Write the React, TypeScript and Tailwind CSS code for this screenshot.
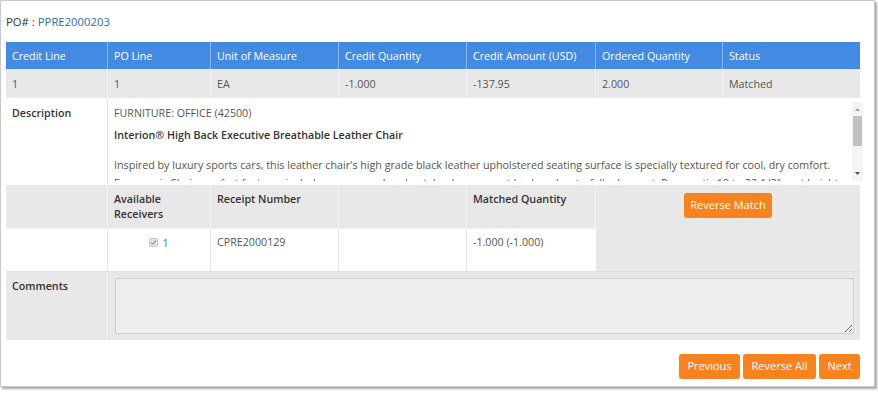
import React from 'react';

const font = { fontFamily: '"Open Sans", "Noto Sans", sans-serif' };

const headers = [
  'Credit Line',
  'PO Line',
  'Unit of Measure',
  'Credit Quantity',
  'Credit Amount (USD)',
  'Ordered Quantity',
  'Status',
];

const values = ['1', '1', 'EA', '-1.000', '-137.95', '2.000', 'Matched'];

const cols = 'grid grid-cols-[102px_103px_128px_128px_129px_127px_1fr]';

function OrangeButton({ label, className = '' }: { label: string; className?: string }) {
  return (
    <button
      className={`h-[25px] whitespace-nowrap rounded-[3px] bg-[#f7821e] text-[11px] text-white ${className}`}
    >
      {label}
    </button>
  );
}

export default function App() {
  return (
    <div className="h-[393px] w-[878px] bg-white text-[10.7px] text-[#555]" style={font}>
      <div className="flex h-[387px] w-[875px] flex-col border border-[#c9c9c9] px-[5px] shadow-[2px_2px_2px_rgba(0,0,0,0.35)]">
        <div className="flex h-[41px] items-center pt-[1px] text-[11.3px] text-[#333]">
          <span>PO# :</span>
          <span className="ml-[3px] text-[#2d6db4]">PPRE2000203</span>
        </div>

        <div className="w-[854px]">
          {/* header */}
          <div className={`${cols} h-[27px] bg-[#438ae2] text-white`}>
            {headers.map((h, i) => (
              <div
                key={h}
                className={`flex items-center whitespace-nowrap px-[6px] pt-[1px] ${i < headers.length - 1 ? 'border-r border-[#8db8ee]' : ''}`}
              >
                {h}
              </div>
            ))}
          </div>

          {/* values */}
          <div className={`${cols} h-[29px] bg-[#e8e8e8]`}>
            {values.map((v, i) => (
              <div
                key={i}
                className={`flex items-center px-[6px] pt-[1px] ${i < values.length - 1 ? 'border-r border-[#f4f4f4]' : ''}`}
              >
                {v}
              </div>
            ))}
          </div>

          {/* description */}
          <div className="grid h-[87px] grid-cols-[102px_1fr] bg-white">
            <div className="border-r border-[#e6e6e6] px-[6px] pt-[7px] font-semibold text-[#333]">
              Description
            </div>
            <div className="flex h-[87px] px-[6px] pt-[4px] pb-[4px]">
              <div className="flex-1 overflow-hidden pt-[2px] leading-[18px]">
                <div>FURNITURE: OFFICE (42500)</div>
                <div className="mt-[4px] font-semibold text-[#333]">
                  Interion® High Back Executive Breathable Leather Chair
                </div>
                <p className="mt-[12px] w-[735px]">
                  Inspired by luxury sports cars, this leather chair's high grade black leather upholstered
                  seating surface is specially textured for cool, dry comfort. Ergonomic Chair comfort
                  features include a generous headrest, lumbar support back and waterfall edge seat.
                  Pneumatic 19 to 22-1/2" seat height adjustment.
                </p>
              </div>
              <div className="ml-[3px] flex w-[11px] flex-col items-center bg-[#f4f4f4]">
                <svg width="7" height="10" viewBox="0 0 7 10" className="mt-[2px]">
                  <path d="M1 7 L3.5 4 L6 7 Z" fill="#a0a0a0" />
                </svg>
                <div className="mt-[2px] h-[30px] w-[9px] bg-[#c1c1c1]" />
                <div className="flex-1" />
                <svg width="7" height="10" viewBox="0 0 7 10" className="mb-[2px]">
                  <path d="M1 3 L3.5 6 L6 3 Z" fill="#505050" />
                </svg>
              </div>
            </div>
          </div>

          {/* receivers */}
          <div className="grid grid-cols-[102px_103px_128px_128px_129px_1fr] grid-rows-[44px_42px]">
            <div className="border-r border-b border-[#f2f2f2] bg-[#e8e8e8]" />
            <div className="border-r border-b border-[#f2f2f2] bg-[#e8e8e8] px-[6px] pt-[7px] font-semibold leading-[15px] text-[#333]">
              Available
              <br />
              Receivers
            </div>
            <div className="border-r border-b border-[#f2f2f2] bg-[#e8e8e8] px-[6px] pt-[7px] font-semibold leading-[15px] text-[#333]">
              Receipt Number
            </div>
            <div className="border-r border-b border-[#f2f2f2] bg-[#e8e8e8]" />
            <div className="border-r border-b border-[#f2f2f2] bg-[#e8e8e8] px-[6px] pt-[7px] font-semibold leading-[15px] text-[#333]">
              Matched Quantity
            </div>
            <div className="row-span-2 flex justify-center bg-[#e8e8e8] pt-[8px]">
              <OrangeButton label="Reverse Match" className="h-[24px] w-[88px]" />
            </div>

            <div className="border-r border-[#e6e6e6] bg-white" />
            <div className="flex items-start justify-center border-r border-[#e6e6e6] bg-white pt-[5px]">
              <span className="mt-[4px] flex h-[9px] w-[9px] items-center justify-center rounded-[2px] border border-[#c8c8c8] bg-[#e4e4e4]">
                <svg width="7" height="7" viewBox="0 0 7 7">
                  <path d="M1 3.6 L2.8 5.2 L6 1.5" stroke="#9a9a9a" strokeWidth="1.2" fill="none" />
                </svg>
              </span>
              <span className="ml-[4px] leading-[18px] text-[#3b73b5]">1</span>
            </div>
            <div className="border-r border-[#e6e6e6] bg-white px-[6px] pt-[5px] leading-[16px]">
              CPRE2000129
            </div>
            <div className="border-r border-[#e6e6e6] bg-white" />
            <div className="bg-white px-[6px] pt-[5px] leading-[16px]">-1.000 (-1.000)</div>
          </div>

          {/* comments */}
          <div className="grid h-[69px] grid-cols-[102px_1fr] border-t border-[#e0e0e0] bg-[#e8e8e8]">
            <div className="border-r border-[#f2f2f2] px-[6px] pt-[6px] font-semibold text-[#333]">
              Comments
            </div>
            <div className="px-[7px] pt-[6px]">
              <textarea
                className="block h-[56px] w-[739px] resize rounded-[2px] border border-[#cfcfcf] bg-[#eeeeee] outline-none"
                defaultValue=""
              />
            </div>
          </div>
        </div>

        <div className="mt-[14px] flex w-[854px] justify-end gap-[3px]">
          <OrangeButton label="Previous" className="w-[61px]" />
          <OrangeButton label="Reverse All" className="w-[73px]" />
          <OrangeButton label="Next" className="w-[41px]" />
        </div>
      </div>
    </div>
  );
}
